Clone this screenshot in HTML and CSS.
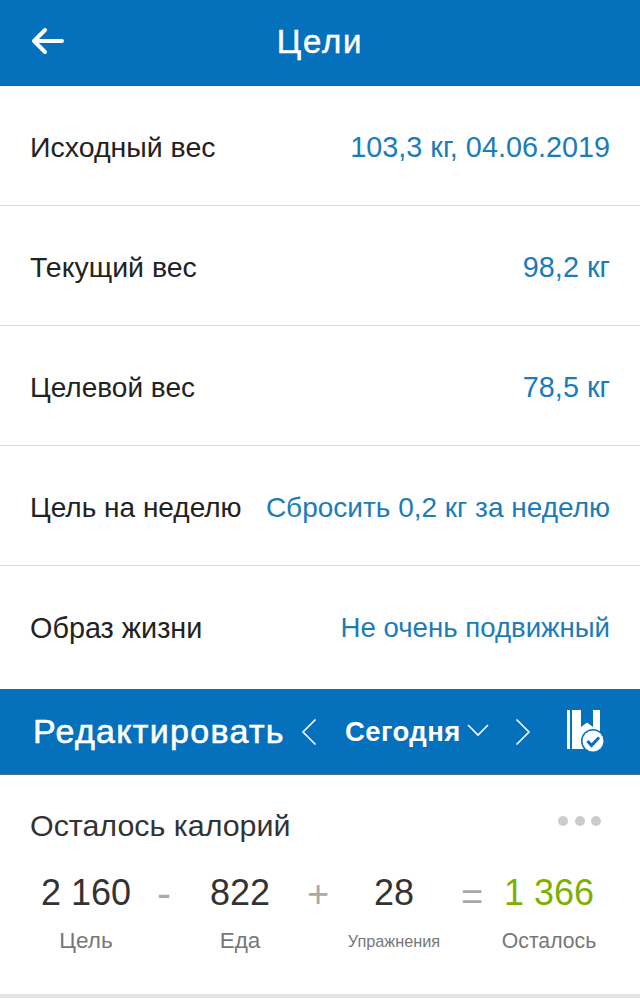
FILE: index.html
```html
<!DOCTYPE html>
<html lang="ru">
<head>
    <meta charset="UTF-8">
    <title>Цели</title>
    <link rel="stylesheet" href="styles.css">
</head>
<body>
    <header class="topbar">
        <svg class="back" width="34" height="30" viewBox="0 0 34 30"><path d="M3 15H31M14 4L3 15L14 26" fill="none" stroke="#fff" stroke-width="4" stroke-linecap="round" stroke-linejoin="round"/></svg>
        <h1 class="title">Цели</h1>
    </header>
    <section class="goals">
        <div class="row"><span>Исходный вес</span><span class="val wide">103,3 кг, 04.06.2019</span></div>
        <div class="row"><span>Текущий вес</span><span class="val wide">98,2 кг</span></div>
        <div class="row"><span class="narrow">Целевой вес</span><span class="val wide">78,5 кг</span></div>
        <div class="row"><span class="narrow">Цель на неделю</span><span class="val narrow">Сбросить 0,2 кг за неделю</span></div>
        <div class="row last"><span class="wide">Образ жизни</span><span class="val smallest">Не очень подвижный</span></div>
    </section>
    <div class="editbar">
        <span class="edit">Редактировать</span>
        <svg class="prev" width="16" height="28" viewBox="0 0 16 28"><path d="M14.500 1.500L2 14L14.500 26.500" fill="none" stroke="#fff" stroke-width="1.600"/></svg>
        <span class="day">Сегодня</span>
        <svg class="caret" width="22" height="14" viewBox="0 0 22 14"><path d="M1 2L11 12L21 2" fill="none" stroke="#fff" stroke-width="1.600"/></svg>
        <svg class="next" width="16" height="28" viewBox="0 0 16 28"><path d="M1.500 1.500L14 14L1.500 26.500" fill="none" stroke="#fff" stroke-width="1.600"/></svg>
        <svg class="diary" width="38" height="43" viewBox="0 0 38 43">
            <rect x="0" y="0" width="3" height="39" fill="#fff"/>
            <path d="M5 0H33V39H5Z" fill="#fff"/>
            <path d="M14 0H26V17L20 12.500L14 17Z" fill="#0570bc"/>
            <circle cx="26" cy="31" r="12" fill="#0570bc"/>
            <circle cx="26" cy="31" r="10.500" fill="#fff"/>
            <path d="M20.500 31L24.500 35.500L32 27.500" fill="none" stroke="#0570bc" stroke-width="3"/>
        </svg>
    </div>
    <section class="card">
        <div class="card-head">
            <span class="card-title">Осталось калорий</span>
            <span class="dots"><i></i><i></i><i></i></span>
        </div>
        <div class="calc">
            <div class="col c1"><b>2 160</b><small>Цель</small></div>
            <div class="op o1">-</div>
            <div class="col c2"><b>822</b><small>Еда</small></div>
            <div class="op o2">+</div>
            <div class="col c3"><b>28</b><small class="tiny">Упражнения</small></div>
            <div class="op o3">=</div>
            <div class="col c4"><b class="green">1 366</b><small class="left">Осталось</small></div>
        </div>
    </section>
    <div class="footline"></div>
</body>
</html>
```

FILE: styles.css
```css
* { box-sizing: border-box; }
body { margin: 0; width: 640px; height: 998px; overflow: hidden; background: #fff; font-family: "Liberation Sans", Arial, sans-serif; color: #222; }

.topbar { height: 86px; background: #0570bc; display: flex; align-items: center; justify-content: center; position: relative; padding-bottom: 2px; }
.back { position: absolute; left: 31px; top: 26px; }
.title { margin: 0; font-size: 33px; font-weight: normal; letter-spacing: 1.800px; color: #fff; -webkit-text-stroke: 0.5px #fff; }

.goals { height: 603px; }
.row { height: 120px; padding: 4px 30px 0; display: flex; align-items: center; justify-content: space-between; border-bottom: 1px solid #dcdcdc; font-size: 28.500px; }
.row.last { border-bottom: 0; }
.val { color: #1c7cb8; }
.wide { font-size: 28.800px; }
.narrow { font-size: 28px; }
.smallest { font-size: 27.600px; }

.editbar { height: 86px; background: #0570bc; border-bottom: 1px solid #56708a; color: #fff; display: flex; align-items: center; padding-left: 33px; }
.editbar svg { flex: none; }
.edit { font-size: 34px; letter-spacing: 1.300px; -webkit-text-stroke: 0.6px #fff; width: 268px; flex: none; white-space: nowrap; }
.prev { margin-right: 28px; }
.day { font-size: 27.500px; font-weight: bold; letter-spacing: 0.400px; width: 122px; flex: none; }
.caret { margin-right: 26px; margin-top: -3px; }
.next { margin-right: 36px; }

.card { height: 219px; padding: 0 30px; }
.card-head { height: 100px; display: flex; justify-content: space-between; align-items: center; font-size: 30.400px; color: #333; }
.dots { display: flex; gap: 6.500px; margin: -8px 9px 0 0; }
.dots i { width: 10px; height: 10px; border-radius: 50%; background: #ccc; }
.calc { position: relative; height: 100px; }
.col, .op { position: absolute; text-align: center; }
.col { top: -1px; }
.col b { display: block; font-weight: normal; font-size: 36px; color: #333; line-height: 38px; }
.col small { display: block; margin-top: 15px; font-size: 22.500px; line-height: 28px; color: #777; }
.col small.tiny { font-size: 16.300px; }
.col small.left { font-size: 21.200px; }
.col b.green { color: #7fb000; }
.c1 { left: 0; width: 112px; }
.c2 { left: 150px; width: 120px; }
.c3 { left: 304px; width: 120px; }
.c4 { left: 459px; width: 120px; }
.op { font-size: 38px; color: #aaa; line-height: 38px; top: 0; }
.o1 { left: 124px; width: 20px; font-size: 42px; }
.o2 { left: 276px; width: 24px; }
.o3 { left: 430px; width: 24px; top: 3px; }

.footline { height: 4px; background: #e4e4e4; }
```
